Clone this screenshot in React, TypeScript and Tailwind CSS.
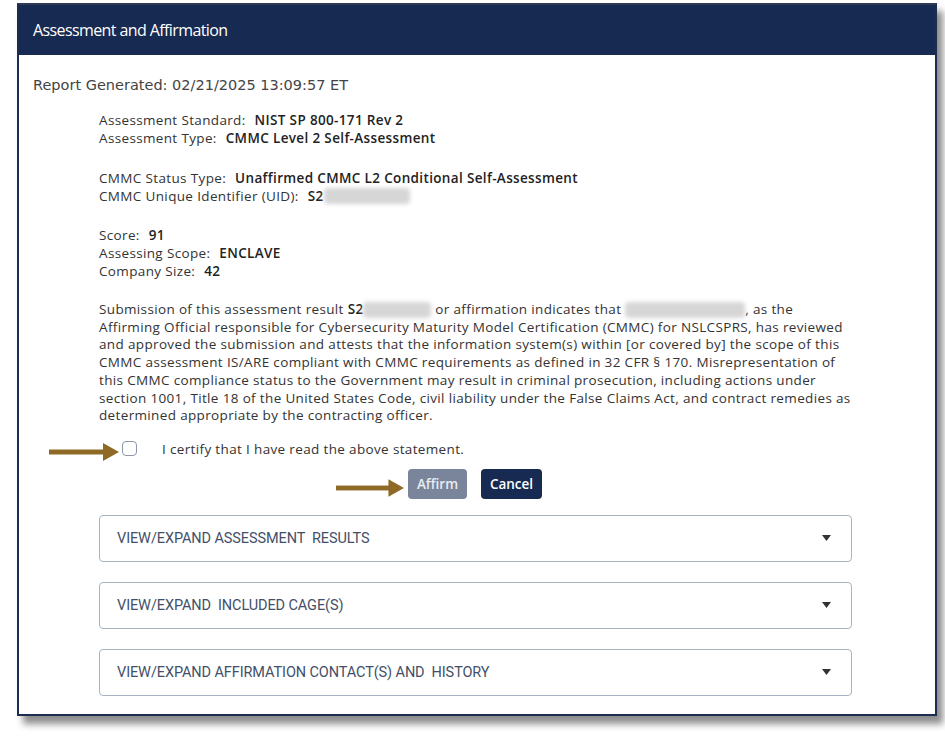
import React from "react";

function Arrow({ className }: { className?: string }) {
  return (
    <svg className={className} width="70" height="20" viewBox="0 0 70 20">
      <rect x="0" y="7.5" width="56" height="5" fill="#8e6a26" />
      <polygon points="54,1 70,10 54,19" fill="#8e6a26" />
    </svg>
  );
}

function Blur({ w }: { w: number }) {
  return (
    <span
      className="inline-block align-middle h-[16px] bg-[#d6d6d6] blur-[2px] rounded-sm"
      style={{ width: w }}
    />
  );
}

function Accordion({ label }: { label: string }) {
  return (
    <div className="h-[47px] border border-[#aab3c4] rounded-[4px] flex items-center justify-between pl-[17px] pr-[20px]">
      <span
        className="text-[14.5px] text-[#434f68] whitespace-pre tracking-[-0.1px]"
        style={{ fontFamily: "Roboto, 'Liberation Sans', sans-serif" }}
      >
        {label}
      </span>
      <svg width="9" height="6" viewBox="0 0 9 6">
        <polygon points="0,0 9,0 4.5,6" fill="#333" />
      </svg>
    </div>
  );
}

export default function App() {
  const body = { fontFamily: "'Open Sans', 'Noto Sans', sans-serif" };
  return (
    <div className="w-[945px] h-[750px] bg-white pl-[17px] pt-[3px]">
      <div className="w-[920px] h-[713px] border-2 border-[#1b2d51] border-t-[#2e3b52] bg-white shadow-[6px_8px_7px_rgba(0,0,0,0.45)] flex flex-col">
        <div className="h-[50px] bg-[#172a51] flex items-center pl-[14px]">
          <span
            className="text-white text-[16px] tracking-[-0.6px]"
            style={body}
          >
            Assessment and Affirmation
          </span>
        </div>
        <div className="pt-[21px] text-[#333]" style={body}>
          <div
            className="pl-[14px] text-[14.5px] text-[#444] leading-[18px]"
            style={{ fontFamily: "'DejaVu Sans', sans-serif" }}
          >
            Report Generated: 02/21/2025 13:09:57 ET
          </div>
          <div className="pl-[80px] pr-[40px] text-[13.5px] tracking-[0.35px] leading-[18px] text-[#333]">
            <div className="mt-[17px]">
              <div>
                Assessment Standard:<span className="ml-[9px] font-semibold text-[#222]">NIST SP 800-171 Rev 2</span>
              </div>
              <div>
                Assessment Type:<span className="ml-[9px] font-semibold text-[#222]">CMMC Level 2 Self-Assessment</span>
              </div>
            </div>
            <div className="mt-[22px]">
              <div>
                CMMC Status Type:<span className="ml-[9px] font-semibold text-[#222]">Unaffirmed CMMC L2 Conditional Self-Assessment</span>
              </div>
              <div className="flex items-center">
                CMMC Unique Identifier (UID):<span className="ml-[9px] font-semibold text-[#222]">S2</span>
                <Blur w={86} />
              </div>
            </div>
            <div className="mt-[21px]">
              <div>
                Score:<span className="ml-[9px] font-semibold text-[#222]">91</span>
              </div>
              <div>
                Assessing Scope:<span className="ml-[9px] font-semibold text-[#222]">ENCLAVE</span>
              </div>
              <div>
                Company Size:<span className="ml-[9px] font-semibold text-[#222]">42</span>
              </div>
            </div>
            <p className="mt-[21px] leading-[17.7px] whitespace-nowrap">
              Submission of this assessment result <span className="font-semibold text-[#222]">S2</span>
              <Blur w={68} /> or affirmation indicates that <Blur w={120} />, as the
              <br />
              Affirming Official responsible for Cybersecurity Maturity Model Certification (CMMC) for NSLCSPRS, has reviewed
              <br />
              and approved the submission and attests that the information system(s) within [or covered by] the scope of this
              <br />
              CMMC assessment IS/ARE compliant with CMMC requirements as defined in 32 CFR § 170. Misrepresentation of
              <br />
              this CMMC compliance status to the Government may result in criminal prosecution, including actions under
              <br />
              section 1001, Title 18 of the United States Code, civil liability under the False Claims Act, and contract remedies as
              <br />
              determined appropriate by the contracting officer.
            </p>
          </div>
          <div className="relative mt-[15px] flex items-center pl-[103px] h-[18px]">
            <Arrow className="absolute left-[30px] top-[2px]" />
            <span className="w-[15px] h-[15px] border border-[#8d96a8] rounded-[4px] bg-white" />
            <span className="ml-[25px] text-[13.5px] tracking-[0.35px] text-[#333]">
              I certify that I have read the above statement.
            </span>
          </div>
          <div className="mt-[11px] flex justify-center gap-[14px] pr-[4px]">
            <div className="relative">
              <Arrow className="absolute left-[-72px] top-[9px] w-[68px]" />
              <button className="h-[30px] w-[59px] rounded-[4px] bg-[#7a859b] text-[#e9ecf1] text-[13.5px] font-semibold">
                Affirm
              </button>
            </div>
            <button className="h-[30px] w-[61px] rounded-[4px] bg-[#172a51] text-white text-[13.5px] font-semibold">
              Cancel
            </button>
          </div>
          <div className="mt-[16px] ml-[80px] w-[753px] flex flex-col gap-[20px]">
            <Accordion label="VIEW/EXPAND ASSESSMENT  RESULTS" />
            <Accordion label="VIEW/EXPAND  INCLUDED CAGE(S)" />
            <Accordion label="VIEW/EXPAND AFFIRMATION CONTACT(S) AND  HISTORY" />
          </div>
        </div>
      </div>
    </div>
  );
}
